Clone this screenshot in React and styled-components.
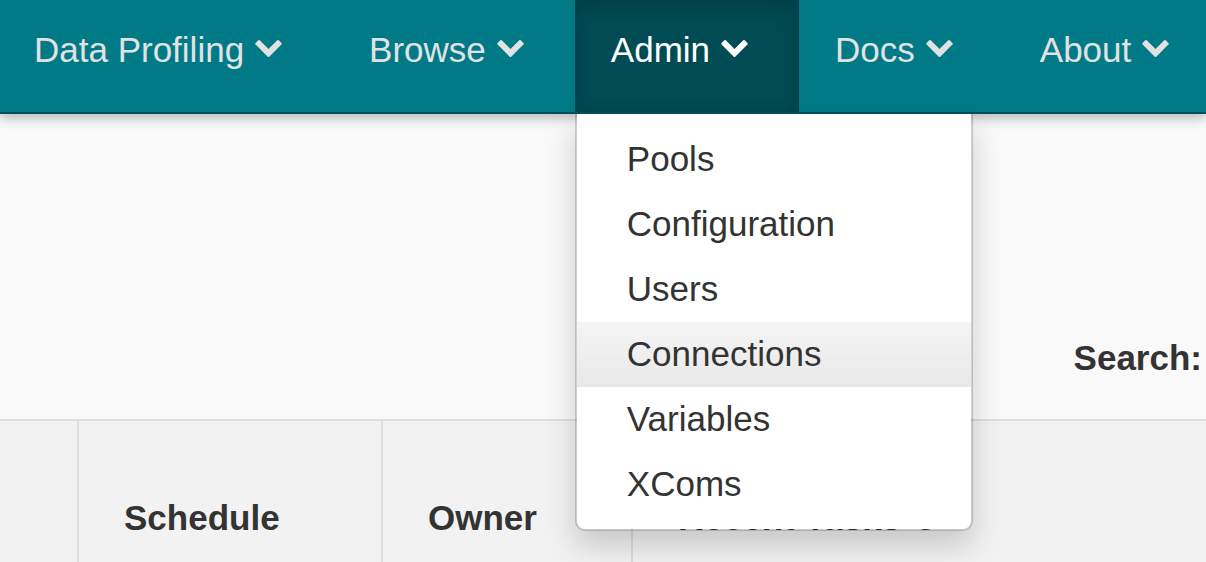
import React from "react";
import styled, { createGlobalStyle } from "styled-components";

const GlobalStyle = createGlobalStyle`
  html, body { margin: 0; padding: 0; }
  body {
    background: #f9f9f9;
    font-family: "Liberation Sans", Helvetica, Arial, sans-serif;
    color: #333;
    overflow: hidden;
  }
`;

const Navbar = styled.nav`
  position: relative;
  z-index: 10;
  display: flex;
  height: 112px;
  background: #007a87;
  border-bottom: 2px solid #00525b;
  box-shadow: 0 3px 12px rgba(0, 0, 0, 0.3);
`;

const NavList = styled.ul`
  display: flex;
  margin: 0 0 0 -2px;
  padding: 0;
  list-style: none;
`;

const NavItem = styled.li`
  position: relative;
  display: flex;
`;

const NavLink = styled.a`
  display: flex;
  align-items: center;
  gap: 11px;
  padding: 25px 51px 37px 36px;
  font-size: 35px;
  line-height: 50px;
  white-space: nowrap;
  text-decoration: none;
  color: ${(p) => (p.$active ? "#ffffff" : "#e2e2e2")};
  background: ${(p) => (p.$active ? "#004b54" : "transparent")};
  box-shadow: ${(p) => (p.$active ? "inset 0 7px 22px rgba(0,0,0,0.18)" : "none")};
`;

const ChevronSvg = styled.svg`
  width: 27px;
  height: 17px;
  margin-bottom: 4px;
  fill: currentColor;
  flex: none;
`;

const Chevron = () => (
  <ChevronSvg viewBox="90 533 1612 1035" aria-hidden="true">
    <path d="M1683 808l-742 741q-19 19-45 19t-45-19l-742-741q-19-19-19-45.5t19-45.5l166-165q19-19 45-19t45 19l531 531 531-531q19-19 45-19t45 19l166 165q19 19 19 45.5t-19 45.5z" />
  </ChevronSvg>
);

const Dropdown = styled.ul`
  position: absolute;
  top: calc(100% + 2px);
  left: 0;
  width: 398px;
  box-sizing: border-box;
  margin: 0;
  padding: 12.5px 0;
  list-style: none;
  background: #fff;
  background-clip: padding-box;
  border: 2px solid rgba(0, 0, 0, 0.16);
  border-top: 0;
  border-radius: 0 0 10px 10px;
  box-shadow: 0 15px 30px rgba(0, 0, 0, 0.175);
`;

const MenuLink = styled.a`
  display: block;
  padding: 7.5px 50px;
  font-size: 35px;
  line-height: 50px;
  color: #333;
  text-decoration: none;
  white-space: nowrap;
  background: ${(p) =>
    p.$hover ? "linear-gradient(to bottom, #f5f5f5 0%, #e8e8e8 100%)" : "transparent"};
`;

const Toolbar = styled.div`
  height: 305px;
  box-sizing: border-box;
  display: flex;
  justify-content: flex-end;
  padding: 219px 4px 0 0;
`;

const SearchLabel = styled.label`
  font-size: 35px;
  line-height: 50px;
  font-weight: bold;
  color: #333;
`;

const HeaderRow = styled.div`
  display: grid;
  grid-template-columns: 77px 304px 250px 1fr;
  height: 200px;
  background: #f2f2f2;
  border-top: 2px solid #ddd;
`;

const HeaderCell = styled.div`
  display: flex;
  align-items: flex-start;
  gap: 12px;
  padding: 72px 0 0 45px;
  border-left: ${(p) => (p.$first ? "none" : "2px solid #ddd")};
  font-size: 35px;
  line-height: 50px;
  font-weight: bold;
  color: #333;
  white-space: nowrap;
`;

const InfoSvg = styled.svg`
  width: 25px;
  height: 25px;
  margin-top: 12px;
  flex: none;
`;

const InfoIcon = () => (
  <InfoSvg viewBox="0 0 24 24" aria-hidden="true">
    <circle cx="12" cy="12" r="12" fill="#333" />
    <rect x="10.5" y="10" width="3" height="9" fill="#f2f2f2" />
    <circle cx="12" cy="6.5" r="1.8" fill="#f2f2f2" />
  </InfoSvg>
);

const navItems = ["Data Profiling", "Browse", "Admin", "Docs", "About"];
const adminItems = ["Pools", "Configuration", "Users", "Connections", "Variables", "XComs"];

export default function App() {
  return (
    <>
      <GlobalStyle />
      <Navbar>
        <NavList>
          {navItems.map((label) => (
            <NavItem key={label}>
              <NavLink href="#" $active={label === "Admin"}>
                {label}
                <Chevron />
              </NavLink>
              {label === "Admin" && (
                <Dropdown>
                  {adminItems.map((it) => (
                    <li key={it}>
                      <MenuLink href="#" $hover={it === "Connections"}>
                        {it}
                      </MenuLink>
                    </li>
                  ))}
                </Dropdown>
              )}
            </NavItem>
          ))}
        </NavList>
      </Navbar>
      <Toolbar>
        <SearchLabel>Search:</SearchLabel>
      </Toolbar>
      <HeaderRow>
        <HeaderCell $first />
        <HeaderCell>Schedule</HeaderCell>
        <HeaderCell>Owner</HeaderCell>
        <HeaderCell>
          Recent Tasks
          <InfoIcon />
        </HeaderCell>
      </HeaderRow>
    </>
  );
}
